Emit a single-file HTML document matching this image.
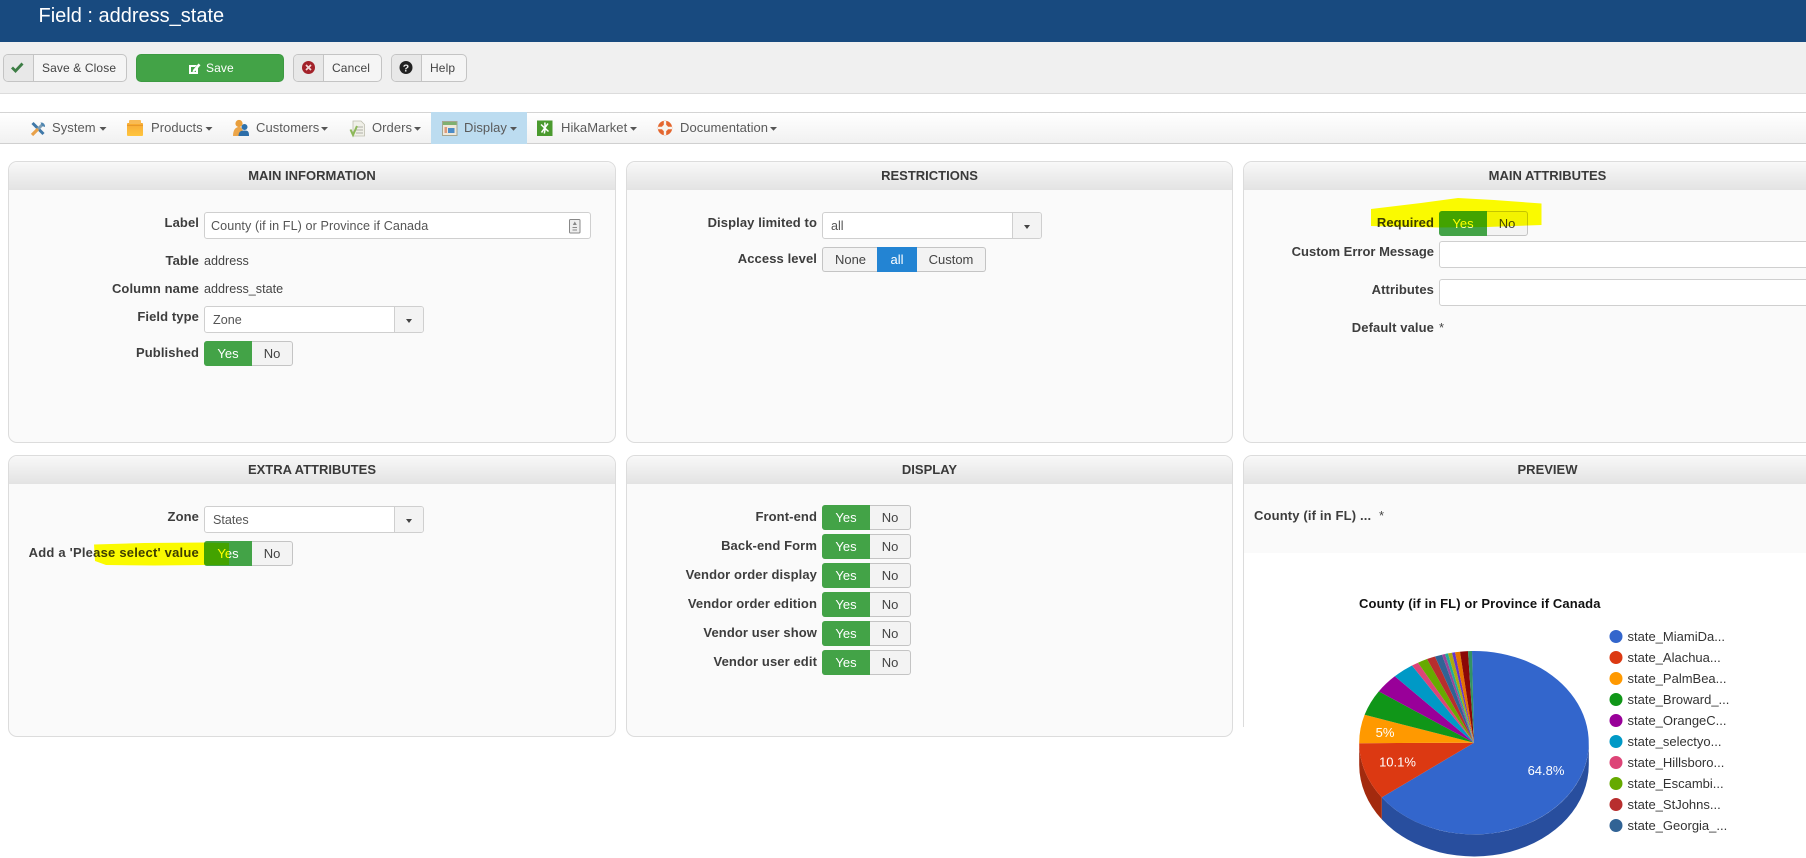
<!DOCTYPE html>
<html lang="en"><head><meta charset="utf-8"><title>Field : address_state</title>
<style>
html,body{margin:0;padding:0;background:#fff;}
body{width:1806px;height:858px;overflow:hidden;position:relative;font-family:"Liberation Sans",Arial,sans-serif;font-size:13px;color:#333;}
div{box-sizing:border-box;}
.a{position:absolute;white-space:nowrap;}
.hd{position:absolute;left:0;top:0;width:1806px;height:42px;background:#184a7f;}
.ti{position:absolute;left:38.500px;top:3px;color:#fff;font-size:20px;line-height:26px;}
.tb{position:absolute;left:0;top:42px;width:1806px;height:52px;background:#f0f0f0;border-bottom:1px solid #dcdcdc;}
.btn{position:absolute;top:54px;height:28px;border:1px solid #c4c4c4;border-radius:5px;background:#f5f5f5;font-size:12px;letter-spacing:.12px;line-height:27px;color:#444;}
.btn i{position:absolute;left:0;top:0;bottom:0;border-right:1px solid #c4c4c4;background:#e8e8e8;border-radius:4px 0 0 4px;}
.btn span{position:absolute;top:0;}
.menu{position:absolute;left:0;top:112px;width:1806px;height:32px;background:linear-gradient(#fff,#f1f1f1);border-top:1px solid #d4d4d4;border-bottom:1px solid #d0d0d0;}
.act{position:absolute;left:431px;top:112px;width:96px;height:32px;background:#bcdcf0;}
.m{position:absolute;top:118px;line-height:20px;color:#5a5a5a;font-size:13px;letter-spacing:.05px;}
.p{position:absolute;background:#fafafa;border:1px solid #dcdcdc;border-radius:9px;overflow:hidden;}
.p .h{position:absolute;left:0;top:0;right:0;height:28px;background:linear-gradient(#f8f8f8,#e3e3e3);text-align:center;font-weight:bold;font-size:13px;color:#3a3a3a;line-height:28px;}
.l{position:absolute;width:190px;text-align:right;font-weight:bold;line-height:20px;color:#3d3d3d;white-space:nowrap;letter-spacing:.1px;}
.v{position:absolute;line-height:20px;color:#444;white-space:nowrap;}
.inp{position:absolute;background:#fff;border:1px solid #cfcfcf;border-radius:3px;height:27px;line-height:27px;color:#555;padding-left:6px;font-size:12.6px;letter-spacing:.08px;}
.sel{position:absolute;background:#fff;border:1px solid #cfcfcf;border-radius:3px;height:27px;line-height:27px;color:#555;padding-left:8px;font-size:12.6px;}
.sel b{position:absolute;right:0;top:0;bottom:0;width:28px;background:#f3f3f3;border-left:1px solid #cfcfcf;border-radius:0 2px 2px 0;}
.sel b:after{content:"";position:absolute;left:11px;top:12px;border:3.5px solid transparent;border-top:4px solid #444;border-bottom:0;}
.t{position:absolute;height:25px;width:89px;border:1px solid #c4c4c4;border-radius:3px;background:#f3f3f3;line-height:23px;text-align:center;color:#444;font-size:13px;}
.t u{position:absolute;top:-1px;bottom:-1px;left:-1px;width:48px;background:#43a347;color:#fff;text-decoration:none;border-radius:3px 0 0 3px;line-height:25px;}
.t s{position:absolute;top:0;left:47px;right:0;text-decoration:none;}
.g{position:absolute;height:25px;border:1px solid #c4c4c4;background:#f3f3f3;line-height:23px;text-align:center;color:#444;}
svg.top{position:absolute;left:0;top:0;}
.leg{font-size:13px;fill:#333;font-family:"Liberation Sans",Arial,sans-serif;}
</style></head><body>
<div class="hd"></div><div class="ti">Field : address_state</div>
<div class="tb"></div>

<div class="btn" style="left:3px;width:124px"><i style="width:29px"></i><span style="left:38px">Save &amp; Close</span></div>
<div class="btn" style="left:136px;width:148px;background:#43a347;border-color:#3d9a42;color:#fff"><span style="left:69px">Save</span></div>
<div class="btn" style="left:293px;width:89px"><i style="width:29px"></i><span style="left:38px">Cancel</span></div>
<div class="btn" style="left:391px;width:76px"><i style="width:29px"></i><span style="left:38px">Help</span></div>

<div class="menu"></div><div class="act"></div>
<div class="m" style="left:52px">System</div>
<div class="m" style="left:151px">Products</div>
<div class="m" style="left:256px">Customers</div>
<div class="m" style="left:372px">Orders</div>
<div class="m" style="left:464px">Display</div>
<div class="m" style="left:561px">HikaMarket</div>
<div class="m" style="left:680px">Documentation</div>

<!-- Panel 1 -->
<div class="p" style="left:8px;top:161px;width:608px;height:282px"><div class="h">MAIN INFORMATION</div></div>
<div class="l" style="left:9px;top:213px">Label</div>
<div class="inp" style="left:204px;top:212px;width:387px">County (if in FL) or Province if Canada</div>
<div class="l" style="left:9px;top:251px">Table</div><div class="v" style="left:204px;top:251px;font-size:12.6px">address</div>
<div class="l" style="left:9px;top:279px">Column name</div><div class="v" style="left:204px;top:279px;font-size:12.6px">address_state</div>
<div class="l" style="left:9px;top:307px">Field type</div>
<div class="sel" style="left:204px;top:306px;width:220px">Zone<b></b></div>
<div class="l" style="left:9px;top:343px">Published</div>
<div class="t" style="left:204px;top:341px"><u>Yes</u><s>No</s></div>

<!-- Panel 2 -->
<div class="p" style="left:626px;top:161px;width:607px;height:282px"><div class="h">RESTRICTIONS</div></div>
<div class="l" style="left:627px;top:213px">Display limited to</div>
<div class="sel" style="left:822px;top:212px;width:220px">all<b></b></div>
<div class="l" style="left:627px;top:249px">Access level</div>
<div class="g" style="left:822px;top:247px;width:56px;border-radius:3px 0 0 3px;border-right:0">None</div>
<div class="g" style="left:877px;top:247px;width:40px;background:#2384d3;border-color:#2384d3;color:#fff">all</div>
<div class="g" style="left:917px;top:247px;width:69px;border-radius:0 3px 3px 0;border-left:0">Custom</div>

<!-- Panel 3 -->
<div class="p" style="left:1243px;top:161px;width:640px;height:282px"><div class="h" style="width:607px;right:auto">MAIN ATTRIBUTES</div></div>
<div class="l" style="left:1244px;top:213px">Required</div>
<div class="t" style="left:1439px;top:211px"><u>Yes</u><s>No</s></div>
<div class="l" style="left:1244px;top:242px;letter-spacing:0">Custom Error Message</div>
<div class="inp" style="left:1439px;top:241px;width:500px"></div>
<div class="l" style="left:1244px;top:280px">Attributes</div>
<div class="inp" style="left:1439px;top:279px;width:500px"></div>
<div class="l" style="left:1244px;top:318px">Default value</div>
<div class="v" style="left:1439px;top:318px">*</div>

<!-- Panel 4 -->
<div class="p" style="left:8px;top:455px;width:608px;height:282px"><div class="h">EXTRA ATTRIBUTES</div></div>
<div class="l" style="left:9px;top:507px">Zone</div>
<div class="sel" style="left:204px;top:506px;width:220px">States<b></b></div>
<div class="l" style="left:9px;top:543px;letter-spacing:.22px">Add a 'Please select' value</div>
<div class="t" style="left:204px;top:541px"><u>Yes</u><s>No</s></div>

<!-- Panel 5 -->
<div class="p" style="left:626px;top:455px;width:607px;height:282px"><div class="h">DISPLAY</div></div>
<div class="l" style="left:627px;top:507px">Front-end</div><div class="t" style="left:822px;top:505px"><u>Yes</u><s>No</s></div>
<div class="l" style="left:627px;top:536px">Back-end Form</div><div class="t" style="left:822px;top:534px"><u>Yes</u><s>No</s></div>
<div class="l" style="left:627px;top:565px">Vendor order display</div><div class="t" style="left:822px;top:563px"><u>Yes</u><s>No</s></div>
<div class="l" style="left:627px;top:594px">Vendor order edition</div><div class="t" style="left:822px;top:592px"><u>Yes</u><s>No</s></div>
<div class="l" style="left:627px;top:623px">Vendor user show</div><div class="t" style="left:822px;top:621px"><u>Yes</u><s>No</s></div>
<div class="l" style="left:627px;top:652px">Vendor user edit</div><div class="t" style="left:822px;top:650px"><u>Yes</u><s>No</s></div>

<!-- Panel 6 -->
<div class="p" style="left:1243px;top:455px;width:640px;height:272px;border-bottom:0;border-radius:9px 9px 0 0"><div class="h" style="width:607px;right:auto">PREVIEW</div></div>
<div class="l" style="left:1254px;top:506px;width:auto;letter-spacing:.15px">County (if in FL) ...</div>
<div class="v" style="left:1379px;top:506px">*</div>
<div class="a" style="left:1244px;top:553px;width:562px;height:305px;background:#fff"></div>

<svg class="top" width="1806" height="858" viewBox="0 0 1806 858" font-family="'Liberation Sans',Arial,sans-serif">
<defs><linearGradient id="pb" x1="0" y1="0" x2="0" y2="1"><stop offset="0" stop-color="#f7a92a"/><stop offset=".3" stop-color="#f9b23a"/><stop offset="1" stop-color="#ffc53d"/></linearGradient></defs>
<!-- toolbar icons -->
<path d="M12 67.500l3.500 3.500 7-7.500" fill="none" stroke="#3d7d45" stroke-width="2.800"/>
<path d="M189 65h8l-2 2h-4v5h5v-3l2-2v7h-9z" fill="#fff"/><path d="M193 70l5.500-6.500 2 1.800-5.500 6.200-2.500.600z" fill="#fff"/>
<circle cx="308.500" cy="67.500" r="6.500" fill="#a3222a"/><path d="M306 65l5 5m0-5l-5 5" stroke="#f3d8d8" stroke-width="1.700"/>
<circle cx="406" cy="67.500" r="6.500" fill="#222"/><text x="406" y="71.500" font-size="10.500" font-weight="bold" fill="#eee" text-anchor="middle">?</text>

<!-- carets -->
<g fill="#555">
<polygon points="99.500,127 106.500,127 103,130.700"/><polygon points="205.500,127 212.500,127 209,130.700"/>
<polygon points="321,127 328,127 324.500,130.700"/><polygon points="414,127 421,127 417.500,130.700"/>
<polygon points="510,127 517,127 513.500,130.700"/><polygon points="630,127 637,127 633.500,130.700"/>
<polygon points="770,127 777,127 773.500,130.700"/>
</g>
<!-- menu icons -->
<path d="M32.500 123l11 11" stroke="#3f78a8" stroke-width="3"/><path d="M43 124l-5 5" stroke="#7d9db5" stroke-width="3"/><path d="M38 129l-6 6" stroke="#e8a14a" stroke-width="3.200"/><path d="M40.500 122.500a4 4 0 0 1 4.500 4.500l-3-1z" fill="#4f86b0"/>
<rect x="127" y="123" width="16" height="13" rx="1" fill="url(#pb)"/><rect x="129" y="120" width="12" height="4" rx="1" fill="#f9bb55"/><rect x="127" y="125" width="16" height="1" fill="#e8982a"/>
<circle cx="239" cy="123.500" r="3.600" fill="#e99f3d"/><path d="M233 136c0-6 2.500-9 6-9s4 3 4 9z" fill="#eca64a"/><circle cx="244.500" cy="127" r="3" fill="#2f72ad"/><path d="M238.500 136c0-4 2-5.500 6-5.500s4.500 1.500 4.500 5.500z" fill="#2d6ea8"/>
<path d="M353 121h8l3.500 3.500v11.500h-11.500z" fill="#f0f0e8" stroke="#bdbdae" stroke-width=".8"/><path d="M356 127h7M356 130h7M356 133h7" stroke="#b0b0a8" stroke-width="1"/><path d="M350.500 129.500l2.500 5.500 4-9" fill="none" stroke="#8cb858" stroke-width="2"/>
<rect x="442.500" y="121.500" width="14.500" height="14" fill="#efe8da" stroke="#a5a58f"/><rect x="443" y="122" width="13.500" height="3" fill="#7fb070"/><rect x="448" y="128" width="6.500" height="5" fill="#4c8cc8"/><rect x="444.500" y="127" width="2.500" height="6" fill="#dd9a7c"/>
<rect x="537" y="120.500" width="15.500" height="15.500" fill="#4a9a2e"/><path d="M541 124.500l7.500 7m-.5-8l-6.500 9M544.800 122.500c.5 4 .5 7-.5 11" stroke="#fff" stroke-width="1.500" fill="none"/>
<circle cx="665" cy="128" r="5.200" fill="none" stroke="#e4662e" stroke-width="4"/><path d="M658 128h14M665 121v14" stroke="#f6f4ee" stroke-width="2.400"/>
<!-- input icon -->
<rect x="569.500" y="219.500" width="10.500" height="13.500" rx="1" fill="#eee" stroke="#888"/><path d="M574.800 221.500l-2 3.500h4z M572.500 227h4.500v1h-4.500z M572.500 229.500h4.500v1h-4.500z" fill="#888"/>

<!-- highlights -->
<g style="mix-blend-mode:multiply">
<path d="M1371 209l25-3 25-3 37-5 36 2 47.500 3.500v21.500l-54.500 2-48 .500-68-1.500z" fill="#ffff00"/>
<path d="M94 544.500l50-1.500 60-.500 25 .500v22l-25 0-50 .500-48-.500-11-4z" fill="#ffff00"/>
</g>

<!-- chart -->
<text x="1359" y="608" font-size="13" font-weight="bold" fill="#111" letter-spacing=".12">County (if in FL) or Province if Canada</text>
<path d="M1381.800 797.400A114.800 91.700 0 0 0 1588.800 742.700v22A114.800 91.700 0 0 1 1381.800 819.400z" fill="#284e9e"/>
<path d="M1359.200 743.200A114.800 91.700 0 0 0 1381.800 797.400v22A114.800 91.700 0 0 1 1359.200 765z" fill="#a32a0e"/>
<g>
<path d="M1474 742.700L1472 651A114.800 91.700 0 1 1 1381.800 797.400z" fill="#3366cc"/>
<path d="M1474 742.700L1381.800 797.400A114.800 91.700 0 0 1 1359.200 743.200z" fill="#dc3912"/>
<path d="M1474 742.700L1359.200 743.200A114.800 91.700 0 0 1 1364.600 714.800z" fill="#ff9900"/>
<path d="M1474 742.700L1364.600 714.800A114.800 91.700 0 0 1 1378.800 691.400z" fill="#109618"/>
<path d="M1474 742.700L1378.800 691.400A114.800 91.700 0 0 1 1394.800 676.300z" fill="#990099"/>
<path d="M1474 742.700L1394.800 676.300A114.800 91.700 0 0 1 1412 665.500z" fill="#0099c6"/>
<path d="M1474 742.700L1412 665.500A114.800 91.700 0 0 1 1418 662.700z" fill="#dd4477"/>
<path d="M1474 742.700L1418 662.700A114.800 91.700 0 0 1 1427 659z" fill="#66aa00"/>
<path d="M1474 742.700L1427 659A114.800 91.700 0 0 1 1435 656.500z" fill="#b82e2e"/>
<path d="M1474 742.700L1435 656.500A114.800 91.700 0 0 1 1442 654.700z" fill="#316395"/>
<path d="M1474 742.700L1442 654.700A114.800 91.700 0 0 1 1445 654z" fill="#994499"/>
<path d="M1474 742.700L1445 654A114.800 91.700 0 0 1 1448 653.400z" fill="#22aa99"/>
<path d="M1474 742.700L1448 653.400A114.800 91.700 0 0 1 1452 652.700z" fill="#aaaa11"/>
<path d="M1474 742.700L1452 652.700A114.800 91.700 0 0 1 1455 652.300z" fill="#6633cc"/>
<path d="M1474 742.700L1455 652.300A114.800 91.700 0 0 1 1460 651.700z" fill="#e67300"/>
<path d="M1474 742.700L1460 651.700A114.800 91.700 0 0 1 1468 651.100z" fill="#8b0707"/>
<path d="M1474 742.700L1468 651.100A114.800 91.700 0 0 1 1472 651z" fill="#329262"/>
</g>
<g font-size="13" fill="#fff" text-anchor="middle">
<text x="1546" y="775">64.8%</text><text x="1397.500" y="766.500">10.1%</text><text x="1385" y="737">5%</text>
</g>
<g>
<circle cx="1616" cy="636.500" r="6.500" fill="#3366cc"/><text class="leg" x="1627.500" y="641">state_MiamiDa...</text>
<circle cx="1616" cy="657.500" r="6.500" fill="#dc3912"/><text class="leg" x="1627.500" y="662">state_Alachua...</text>
<circle cx="1616" cy="678.500" r="6.500" fill="#ff9900"/><text class="leg" x="1627.500" y="683">state_PalmBea...</text>
<circle cx="1616" cy="699.500" r="6.500" fill="#109618"/><text class="leg" x="1627.500" y="704">state_Broward_...</text>
<circle cx="1616" cy="720.500" r="6.500" fill="#990099"/><text class="leg" x="1627.500" y="725">state_OrangeC...</text>
<circle cx="1616" cy="741.500" r="6.500" fill="#0099c6"/><text class="leg" x="1627.500" y="746">state_selectyo...</text>
<circle cx="1616" cy="762.500" r="6.500" fill="#dd4477"/><text class="leg" x="1627.500" y="767">state_Hillsboro...</text>
<circle cx="1616" cy="783.500" r="6.500" fill="#66aa00"/><text class="leg" x="1627.500" y="788">state_Escambi...</text>
<circle cx="1616" cy="804.500" r="6.500" fill="#b82e2e"/><text class="leg" x="1627.500" y="809">state_StJohns...</text>
<circle cx="1616" cy="825.500" r="6.500" fill="#316395"/><text class="leg" x="1627.500" y="830">state_Georgia_...</text>
</g>
</svg>
</body></html>
